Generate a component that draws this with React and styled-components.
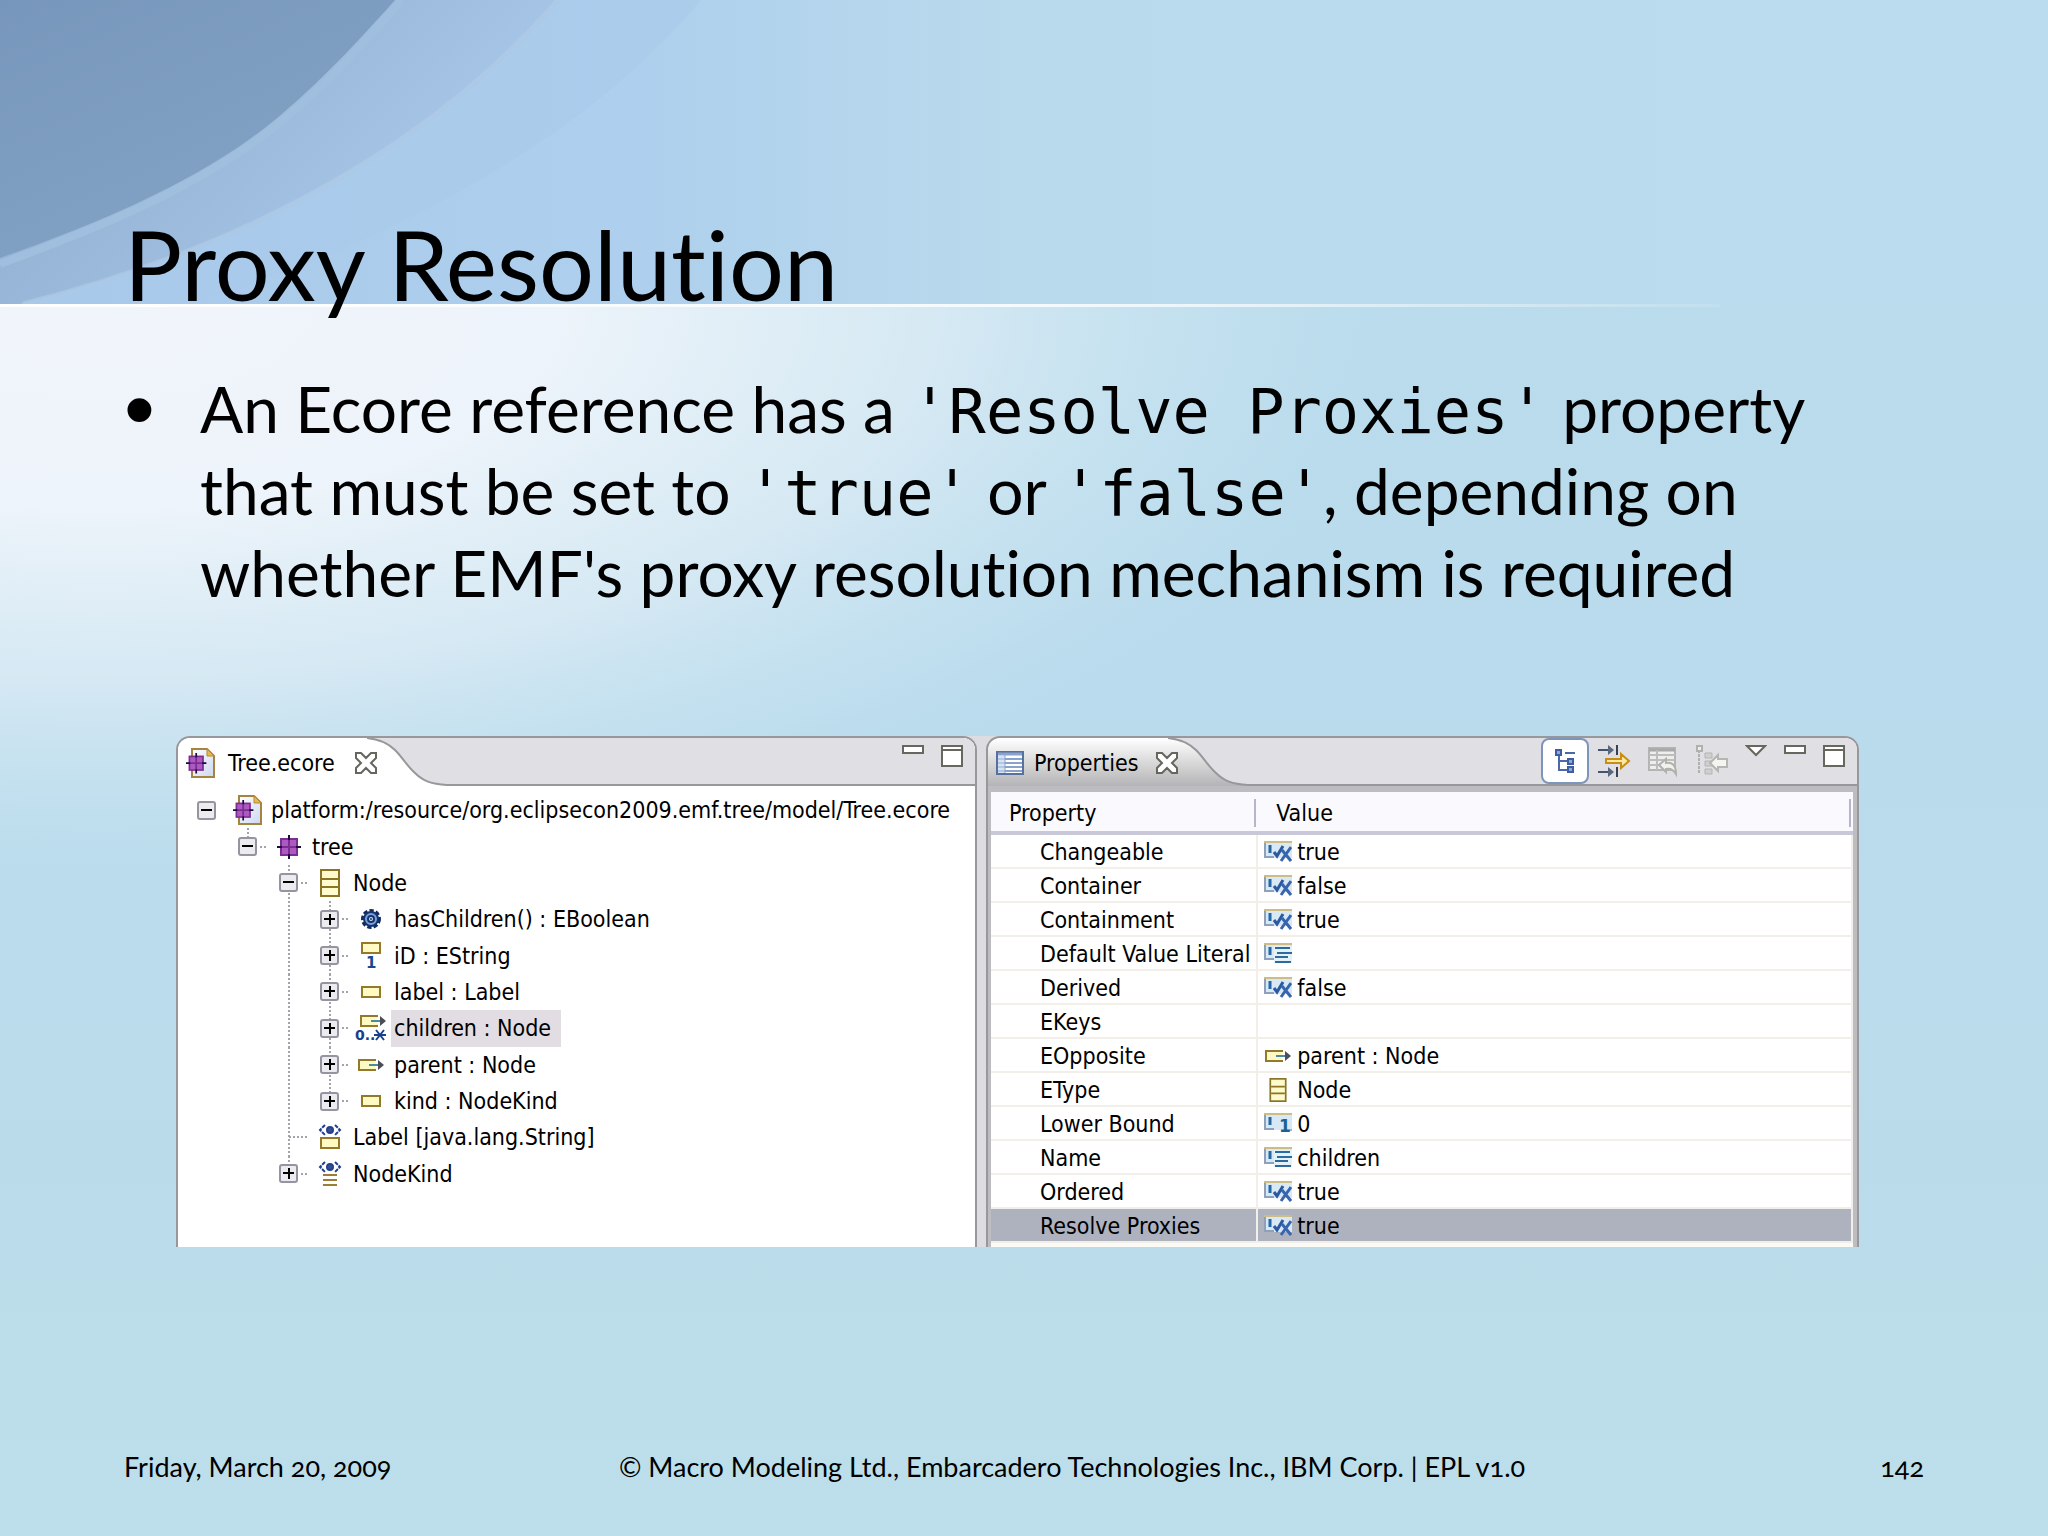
import React, { useState } from 'react';
import styled, { createGlobalStyle, css } from 'styled-components';


const GlobalStyle = createGlobalStyle`
    * {
        box-sizing: border-box;
    }

    body {
        margin: 0;
        background: #bcdeeb;
    }
`;

const Slide = styled.div`
    display: grid;
    min-height: 100vh;
    color: #000;
    font-family: Lato, 'Noto Sans', sans-serif;
    font-variant-ligatures: none;
`;

const Backdrop = styled.svg`
    grid-area: 1 / 1;
    width: 100%;
    height: 100%;
`;

const Content = styled.div`
    grid-area: 1 / 1;
    display: flex;
    flex-direction: column;
    min-width: 0;
    padding: 206px 124px 53px;
`;

const Title = styled.h1`
    margin: 0;
    font-size: 97px;
    font-weight: 400;
    line-height: 116px;
`;

const Bullets = styled.ul`
    margin: 46px 0 0;
    padding: 0;
    list-style: none;
    font-size: 64px;
    line-height: 82px;
`;

const Bullet = styled.li`
    display: flex;
`;

const Dot = styled.span`
    flex: 0 0 76px;
    font-family: 'Liberation Sans', Arial, sans-serif;
    font-size: 88px;
`;

const Code = styled.code`
    font-family: 'DejaVu Sans Mono', monospace;
    font-size: 62px;
    line-height: 1;
`;

const Workbench = styled.div`
    display: grid;
    grid-template-columns: 801fr 873fr;
    gap: 9px;
    margin: 122px 65px 0 52px;
    background: #dddde1;
    border-radius: 14px 14px 0 0;
    font-family: 'DejaVu Sans Condensed', 'DejaVu Sans', Tahoma, sans-serif;
    font-size: 23px;
    line-height: 28px;
`;

const Panel = styled.section`
    display: flex;
    flex-direction: column;
    min-width: 0;
    border: 2px solid #97989b;
    border-bottom: 0;
    border-radius: 14px 14px 0 0;
    background: ${p => p.$framed ? '#bdbdc1' : '#fff'};
`;

const TabBar = styled.div`
    display: flex;
    height: 48px;
    border-radius: 12px 12px 0 0;
    background: ${p => p.$framed ? 'linear-gradient(#fff, #b4b4b6)' : '#fff'};
`;

const Tab = styled.div`
    display: flex;
    align-items: center;
    gap: ${p => p.$wide ? '12px' : '10px'};
    padding: 2px 0 0 8px;
`;

const CurveSvg = styled.svg`
    flex: none;
    margin-left: -10px;
`;

const Toolbar = styled.div`
    display: flex;
    flex: 1;
    align-items: center;
    justify-content: flex-end;
    gap: 17px;
    padding-right: 12px;
    border-bottom: 2px solid #97989b;
    border-top-right-radius: 12px;
    background: #e0dfe4;
`;

const IconButton = styled.button`
    display: flex;
    flex: none;
    padding: 0;
    border: 0;
    background: none;
`;

const CloseButton = styled(IconButton)`
    margin-left: 8px;
`;

const ToggleButton = styled(IconButton)`
    align-items: center;
    justify-content: center;
    width: 48px;
    height: 46px;
    margin-right: -8px;
    border: 2px solid #7c95b8;
    border-radius: 8px;
    background: #fff;
`;

const TreeList = styled.ul`
    display: grid;
    grid-auto-rows: 1fr;
    min-height: 400px;
    margin: 6px 0 54px;
    padding: 0 0 0 8px;
    list-style: none;
`;

const TreeItem = styled.li`
    display: flex;
    align-items: center;
    white-space: nowrap;
`;

const dots = '#a3a3ab 0 2px, transparent 2px 4px';

const guides = {
    none: css`background: none;`,
    top: css`background: repeating-linear-gradient(${dots}) 20px 0 / 2px 50% no-repeat;`,
    full: css`background: repeating-linear-gradient(${dots}) 20px 0 / 2px 100% no-repeat;`,
};

const Guide = styled.span`
    display: flex;
    flex: 0 0 41px;
    align-items: center;
    align-self: stretch;
    ${p => guides[p.$line || 'none']}
`;

const Branch = styled.span`
    flex: 1;
    height: 2px;
    margin-left: ${p => p.$long ? '21px' : '3px'};
    background: repeating-linear-gradient(90deg, ${dots});
`;

const Expander = styled.button`
    display: flex;
    flex: none;
    margin-left: 11px;
    padding: 0;
    border: 0;
    background: none;
`;

const IconCell = styled.span`
    display: flex;
    flex: 0 0 41px;
    align-items: center;
    justify-content: center;
`;

const Label = styled.span`
    display: flex;
    align-items: center;
    align-self: stretch;
    padding: 0 10px 0 3px;
    background: ${p => p.$selected ? '#e1dde3' : 'none'};
`;

const PropertyTable = styled.table`
    width: auto;
    margin: 6px 4px 0 3px;
    border-collapse: separate;
    border-spacing: 0;
    table-layout: fixed;
    background: #fff;
`;

const HeadCell = styled.th`
    height: 43px;
    padding: 2px 0 0 18px;
    border-bottom: 4px solid #c9c8d8;
    background: linear-gradient(#b7b5cc, #b7b5cc) right 2px top 7px / 2px 28px no-repeat, #faf9fe;
    font-weight: 400;
    text-align: left;

    &:first-child {
        width: 31%;
    }
`;

const Cell = styled.td`
    height: 34px;
    padding: 2px 0 0 6px;
    border-right: 2px solid #f2efe8;
    border-bottom: 2px solid #f2efe8;
    background: ${p => p.$selected ? '#aeb1be' : '#fff'};
    white-space: nowrap;
`;

const NameCell = styled(Cell)`
    padding-left: 49px;
`;

const Value = styled.span`
    display: flex;
    align-items: center;
    gap: 5px;
`;

const TableEnd = styled.div`
    height: 4px;
    margin: 0 4px 0 3px;
    background: #fbfaf5;
`;

const Footer = styled.footer`
    display: grid;
    grid-template-columns: 11fr 26fr 3fr;
    margin-top: auto;
    font-size: 27px;
    font-variant-numeric: oldstyle-nums;
    line-height: 32px;
`;

const PageNumber = styled.span`
    text-align: right;
`;


const Waves = () => (
    <Backdrop viewBox="0 0 2048 1536" preserveAspectRatio="none" aria-hidden="true">
        <defs>
            <linearGradient id="base" x1="0" y1="0" x2="0" y2="1">
                <stop offset="0" stopColor="#badcec" />
                <stop offset="0.45" stopColor="#b9dbed" />
                <stop offset="0.75" stopColor="#badcea" />
                <stop offset="1" stopColor="#bddfea" />
            </linearGradient>
            <linearGradient id="sky" x1="0" y1="0" x2="1" y2="0">
                <stop offset="0" stopColor="#a9c8ea" />
                <stop offset="0.3" stopColor="#aecfed" />
                <stop offset="0.5" stopColor="#b9daec" />
                <stop offset="1" stopColor="#bbdcee" />
            </linearGradient>
            <linearGradient id="dark" x1="0" y1="0" x2="0.7" y2="1">
                <stop offset="0" stopColor="#7796bb" />
                <stop offset="1" stopColor="#84a5c6" />
            </linearGradient>
            <linearGradient id="soft" gradientUnits="userSpaceOnUse" x1="180" y1="90" x2="340" y2="240">
                <stop offset="0" stopColor="#97b5d6" />
                <stop offset="1" stopColor="#a5c4e6" />
            </linearGradient>
            <radialGradient id="glow" gradientUnits="userSpaceOnUse" cx="0" cy="0" r="1" gradientTransform="translate(100 305) scale(1300 580)">
                <stop offset="0" stopColor="#f1f4fb" />
                <stop offset="0.35" stopColor="#f0f5fb" stopOpacity="0.95" />
                <stop offset="0.65" stopColor="#e4f0f7" stopOpacity="0.65" />
                <stop offset="0.85" stopColor="#d5e9f3" stopOpacity="0.3" />
                <stop offset="1" stopColor="#cfe5f1" stopOpacity="0" />
            </radialGradient>
            <linearGradient id="horizon" x1="0" y1="0" x2="1" y2="0">
                <stop offset="0" stopColor="#fff" />
                <stop offset="0.6" stopColor="#f4fafd" />
                <stop offset="1" stopColor="#fff" stopOpacity="0.1" />
            </linearGradient>
        </defs>
        <rect width="2048" height="1536" fill="url(#base)" />
        <rect width="2048" height="304" fill="url(#sky)" />
        <path d="M0 0H701C600 120 430 230 190 304H0Z" fill="#a9c9ea" fillOpacity="0.6" />
        <path d="M0 0H555C455 115 290 235 20 304H0Z" fill="url(#soft)" />
        <path d="M558 0C458 115 293 235 23 304" fill="none" stroke="#acc9e6" strokeWidth="5" strokeOpacity="0.7" />
        <path d="M402 0C345 65 295 115 246 148C169 200 84 233 0 264" fill="none" stroke="#a0bedd" strokeWidth="8" />
        <path d="M0 0H395C340 62 290 112 240 146C162 198 78 230 0 258Z" fill="url(#dark)" />
        <rect y="304" width="2048" height="600" fill="url(#glow)" />
        <rect y="304" width="1720" height="3" fill="url(#horizon)" />
    </Backdrop>
);

const Package = ({ x, y }) => (
    <g transform={`translate(${x} ${y})`}>
        <rect x="3" y="3" width="18" height="18" fill="#7d2c94" />
        <path d="M5 5h6v6H5zM13 5h6v6h-6zM5 13h6v6H5zM13 13h6v6h-6z" fill="#ab5bc0" />
        <path d="M12 0v5M12 19v5M0 12h5M19 12h5" stroke="#1e0a3c" strokeWidth="2" />
    </g>
);

const PackageIcon = () => (
    <svg width="24" height="24"><Package x={0} y={0} /></svg>
);

const FileIcon = () => (
    <svg width="30" height="32">
        <defs>
            <linearGradient id="paper" x1="0" y1="0" x2="1" y2="1">
                <stop offset="0" stopColor="#fff" />
                <stop offset="1" stopColor="#ccd8f1" />
            </linearGradient>
        </defs>
        <path d="M6 2H21L28 9V30H6Z" fill="url(#paper)" stroke="#a38441" strokeWidth="2" />
        <path d="M21 2V9H28Z" fill="#e6b753" stroke="#b98a30" strokeWidth="1" />
        <g transform="translate(0 6) scale(0.85)"><Package x={0} y={0} /></g>
    </svg>
);

const ClassIcon = ({ width = 20, height = 28 }) => (
    <svg width={width} height={height} viewBox="0 0 20 28">
        <rect x="1" y="1" width="18" height="26" fill="#fffbcd" stroke="#8c7427" strokeWidth="2" />
        <path d="M2 10H18M2 18H18" stroke="#8c7427" strokeWidth="2" />
    </svg>
);

const OperationIcon = () => (
    <svg width="22" height="22">
        <circle cx="11" cy="11" r="8" fill="none" stroke="#10295e" strokeWidth="4" strokeDasharray="4 2" />
        <circle cx="11" cy="11" r="7" fill="#7ba3d8" stroke="#15336f" strokeWidth="2" />
        <circle cx="11" cy="11" r="3" fill="#d7e6f8" stroke="#15336f" strokeWidth="2" />
        <circle cx="11" cy="11" r="1" fill="#15336f" />
    </svg>
);

const Box = ({ y = 1, width = 18 }) => (
    <rect x="1" y={y} width={width} height="10" fill="#fff9c4" stroke="#94792a" strokeWidth="2" />
);

const AttributeIcon = () => (
    <svg width="20" height="12"><Box /></svg>
);

const IdIcon = () => (
    <svg width="20" height="28">
        <Box />
        <text x="5" y="26" fill="#17498f" fontFamily="DejaVu Sans" fontSize="15" fontWeight="700">1</text>
    </svg>
);

const Arrow = () => (
    <g>
        <path d="M19 0V3M19 9V12" stroke="#fff" strokeWidth="2" />
        <rect x="17" y="3" width="3" height="6" fill="#fff" />
        <path d="M11 6H21" stroke="#4a8aa5" strokeWidth="2" />
        <path d="M20 1L26 6L20 11Z" fill="#4d4d58" />
    </g>
);

const ReferenceIcon = ({ width = 26 }) => (
    <svg width={width} height="12" viewBox="0 0 26 12"><Box /><Arrow /></svg>
);

const ManyIcon = () => (
    <svg width="32" height="26">
        <g transform="translate(5 0)"><Box /><Arrow /></g>
        <text x="0" y="25" fill="#17408c" fontFamily="DejaVu Sans" fontSize="14" fontWeight="700">0..</text>
        <path d="M19 20H31M21 15L29 25M29 15L21 25" stroke="#17408c" strokeWidth="2" />
    </svg>
);

const Eye = () => (
    <g stroke="#23408f" strokeWidth="2" fill="none">
        <path d="M7 1L2 6L7 11M17 1L22 6L17 11" strokeDasharray="4 1" />
        <circle cx="12" cy="6" r="3" fill="#3a4f8f" />
    </g>
);

const DataTypeIcon = () => (
    <svg width="24" height="26">
        <Eye />
        <g transform="translate(2 13)"><Box /></g>
    </svg>
);

const EnumIcon = () => (
    <svg width="24" height="26">
        <Eye />
        <path d="M5 14H19M5 19H19M5 24H19" stroke="#9b7d33" strokeWidth="2" />
    </svg>
);

const ValueBase = () => (
    <g>
        <rect x="0" y="0" width="28" height="17" fill="#d8e9f5" />
        <path d="M0 1H28" stroke="#cbbd85" strokeWidth="2" />
        <path d="M1 2V16H10" fill="none" stroke="#8fa0bb" strokeWidth="2" />
        <path d="M6 4V12" stroke="#2566a5" strokeWidth="3" />
    </g>
);

const BooleanIcon = () => (
    <svg width="28" height="22">
        <ValueBase />
        <path d="M10 11L13 15L19 5" fill="none" stroke="#2c5aa0" strokeWidth="3" />
        <path d="M18 9L27 20M27 6L17 20" fill="none" stroke="#3866ae" strokeWidth="3" />
    </svg>
);

const StringIcon = () => (
    <svg width="28" height="22">
        <ValueBase />
        <rect x="10" y="3" width="18" height="17" fill="#e5f1f8" />
        <path d="M11 5H26M13 10H28M11 14H24M11 19H27" stroke="#2d6a9d" strokeWidth="2" />
    </svg>
);

const NumberIcon = () => (
    <svg width="28" height="22">
        <ValueBase />
        <path d="M17 17H28" stroke="#a9b4c4" strokeWidth="2" />
        <text x="15" y="19" fill="#1d5f94" fontFamily="DejaVu Sans" fontSize="17" fontWeight="700">1</text>
    </svg>
);

const PropertiesIcon = () => (
    <svg width="28" height="24">
        <rect x="1" y="1" width="26" height="22" fill="#fff" stroke="#56719f" strokeWidth="2" />
        <path d="M2 3H26" stroke="#8ba3cb" strokeWidth="3" />
        <path d="M2 8H26M2 12H26M2 16H26M2 20H26" stroke="#8ba3cb" strokeWidth="2" />
        <path d="M2 5H9V22H2Z" fill="#c6d6ef" fillOpacity="0.7" />
        <path d="M9 4V22" stroke="#8ba3cb" strokeWidth="1" />
    </svg>
);

const CloseIcon = () => (
    <svg width="22" height="22">
        <path d="M1 1H6L11 6L16 1H21V6L16 11L21 16V21H16L11 16L6 21H1V16L6 11L1 6Z" fill="#fff" stroke="#66665f" strokeWidth="2" />
    </svg>
);

const MinimizeIcon = () => (
    <svg width="22" height="34">
        <rect x="1" y="2" width="20" height="7" fill="#fff" stroke="#67675f" strokeWidth="2" />
    </svg>
);

const MaximizeIcon = () => (
    <svg width="22" height="34">
        <rect x="1" y="2" width="20" height="20" fill="#fff" stroke="#67675f" strokeWidth="2" />
        <path d="M2 6H20" stroke="#67675f" strokeWidth="2" />
    </svg>
);

const MenuIcon = () => (
    <svg width="22" height="34">
        <path d="M2 2H20L11 11Z" fill="#fff" stroke="#67675f" strokeWidth="2" />
    </svg>
);

const CategoriesIcon = () => (
    <svg width="20" height="24">
        <path d="M4 5V21H14M4 12H14M10 4H20" fill="none" stroke="#4a68aa" strokeWidth="2" />
        <path d="M1 1h5v5H1zM13 10h5v5h-5zM13 18h5v5h-5z" fill="#8ea8d8" stroke="#3f5da2" strokeWidth="2" />
    </svg>
);

const FilterIcon = () => (
    <svg width="33" height="34">
        <path d="M0 6H10M0 28H10" stroke="#44546f" strokeWidth="2" />
        <path d="M10 1L16 6L10 11ZM10 23L16 28L10 33Z" fill="#59687f" />
        <path d="M19 1V11M19 23V33" stroke="#3a4250" strokeWidth="2" />
        <path d="M8 15H23V10L31 17L23 24V19H8Z" fill="#ffe9a0" stroke="#c98d14" strokeWidth="2" />
    </svg>
);

const DefaultsIcon = () => (
    <svg width="30" height="34">
        <rect x="1" y="4" width="26" height="22" fill="#eeeeec" stroke="#b4b4b4" strokeWidth="2" />
        <path d="M1 6H27" stroke="#a9a9a9" strokeWidth="3" />
        <path d="M1 11H27M1 16H27M1 21H27M9 6V26" stroke="#bdbdbd" strokeWidth="2" />
        <path d="M11 21L18 15V19C25 18 28 22 28 30C25 25 22 24 18 25V28Z" fill="#f1f1ee" stroke="#b0b0ac" strokeWidth="2" />
    </svg>
);

const LocateIcon = () => (
    <svg width="33" height="34">
        <path d="M4 6V30" stroke="#b0b0b0" strokeWidth="2" strokeDasharray="3 1" />
        <path d="M2 2h5v5H2z" fill="#eee" stroke="#b0b0b0" strokeWidth="2" />
        <path d="M10 9h7v5h-7zM10 17h7v5h-7zM10 25h7v5h-7z" fill="#cfcfcf" stroke="#b4b4b4" strokeWidth="1" />
        <path d="M15 19L23 11V15H32V23H23V27Z" fill="#f4f4f1" stroke="#b5b5b1" strokeWidth="2" />
    </svg>
);

const ToggleIcon = ({ open }) => (
    <svg width="19" height="19">
        <rect x="1" y="1" width="17" height="17" rx="2" fill="#ececf0" stroke="#9495a0" strokeWidth="2" />
        <path d={open ? 'M4 9H15' : 'M4 9H15M10 4V15'} stroke="#000" strokeWidth="2" />
    </svg>
);

const Curve = () => (
    <CurveSvg width="80" height="48" aria-hidden="true">
        <path d="M0 0C10 1 20 4 28 12C36 20 40 28 48 35C56 43 64 46 80 47V0Z" fill="#e0dfe4" />
        <path d="M0 0C10 1 20 4 28 12C36 20 40 28 48 35C56 43 64 46 80 47" fill="none" stroke="#97989b" strokeWidth="2" />
    </CurveSvg>
);


const nodes = [
    { label: 'platform:/resource/org.eclipsecon2009.emf.tree/model/Tree.ecore', icon: FileIcon, cells: [], line: 'none', open: true, root: true },
    { label: 'tree', icon: PackageIcon, cells: ['none'], line: 'top', open: true },
    { label: 'Node', icon: ClassIcon, cells: ['none', 'none'], line: 'full', open: true },
    { label: 'hasChildren() : EBoolean', icon: OperationIcon, cells: ['none', 'none', 'full'], line: 'full', open: false },
    { label: 'iD : EString', icon: IdIcon, cells: ['none', 'none', 'full'], line: 'full', open: false },
    { label: 'label : Label', icon: AttributeIcon, cells: ['none', 'none', 'full'], line: 'full', open: false },
    { label: 'children : Node', icon: ManyIcon, cells: ['none', 'none', 'full'], line: 'full', open: false },
    { label: 'parent : Node', icon: ReferenceIcon, cells: ['none', 'none', 'full'], line: 'full', open: false },
    { label: 'kind : NodeKind', icon: AttributeIcon, cells: ['none', 'none', 'full'], line: 'top', open: false },
    { label: 'Label [java.lang.String]', icon: DataTypeIcon, cells: ['none', 'none'], line: 'full', leaf: true },
    { label: 'NodeKind', icon: EnumIcon, cells: ['none', 'none'], line: 'top', open: false },
];

const properties = [
    { name: 'Changeable', value: 'true', icon: BooleanIcon },
    { name: 'Container', value: 'false', icon: BooleanIcon },
    { name: 'Containment', value: 'true', icon: BooleanIcon },
    { name: 'Default Value Literal', value: '', icon: StringIcon },
    { name: 'Derived', value: 'false', icon: BooleanIcon },
    { name: 'EKeys', value: '' },
    { name: 'EOpposite', value: 'parent : Node', icon: () => <ReferenceIcon width={28} /> },
    { name: 'EType', value: 'Node', icon: () => <ClassIcon width={28} height={24} /> },
    { name: 'Lower Bound', value: '0', icon: NumberIcon },
    { name: 'Name', value: 'children', icon: StringIcon },
    { name: 'Ordered', value: 'true', icon: BooleanIcon },
    { name: 'Resolve Proxies', value: 'true', icon: BooleanIcon },
];


const EcoreTree = () => {
    const [selected, setSelected] = useState('children : Node');

    return (
        <Panel>
            <TabBar>
                <Tab $wide>
                    <FileIcon />
                    <span>Tree.ecore</span>
                    <CloseButton aria-label="Close Tree.ecore"><CloseIcon /></CloseButton>
                </Tab>
                <Curve />
                <Toolbar>
                    <IconButton aria-label="Minimize"><MinimizeIcon /></IconButton>
                    <IconButton aria-label="Maximize"><MaximizeIcon /></IconButton>
                </Toolbar>
            </TabBar>

            <TreeList>
                { nodes.map(({ label, icon: Icon, cells, line, open, leaf, root }) => (
                    <TreeItem key={label}>
                        { cells.map((cell, i) => <Guide key={i} $line={cell} />) }
                        <Guide $line={line}>
                            { !leaf && <Expander aria-label={`Toggle ${label}`}><ToggleIcon open={open} /></Expander> }
                            { !root && <Branch $long={leaf} /> }
                        </Guide>
                        <IconCell><Icon /></IconCell>
                        <Label $selected={label === selected} onClick={ () => setSelected(label) }>{label}</Label>
                    </TreeItem>
                )) }
            </TreeList>
        </Panel>
    );
}

const Properties = () => {
    const [selected, setSelected] = useState('Resolve Proxies');

    return (
        <Panel $framed>
            <TabBar $framed>
                <Tab>
                    <PropertiesIcon />
                    <span>Properties</span>
                    <CloseButton aria-label="Close Properties"><CloseIcon /></CloseButton>
                </Tab>
                <Curve />
                <Toolbar>
                    <ToggleButton aria-label="Show Categories"><CategoriesIcon /></ToggleButton>
                    <IconButton aria-label="Show Advanced Properties"><FilterIcon /></IconButton>
                    <IconButton aria-label="Restore Default Value" disabled><DefaultsIcon /></IconButton>
                    <IconButton aria-label="Locate Value" disabled><LocateIcon /></IconButton>
                    <IconButton aria-label="View Menu"><MenuIcon /></IconButton>
                    <IconButton aria-label="Minimize"><MinimizeIcon /></IconButton>
                    <IconButton aria-label="Maximize"><MaximizeIcon /></IconButton>
                </Toolbar>
            </TabBar>

            <PropertyTable>
                <thead>
                    <tr>
                        <HeadCell>Property</HeadCell>
                        <HeadCell>Value</HeadCell>
                    </tr>
                </thead>
                <tbody>
                    { properties.map(({ name, value, icon: Icon }) => (
                        <tr key={name} onClick={ () => setSelected(name) }>
                            <NameCell $selected={name === selected}>{name}</NameCell>
                            <Cell $selected={name === selected}>
                                <Value>{ Icon && <Icon /> }{value}</Value>
                            </Cell>
                        </tr>
                    )) }
                </tbody>
            </PropertyTable>
            <TableEnd />
        </Panel>
    );
}

export default () => {
    return (
        <Slide>
            <GlobalStyle />
            <Waves />

            <Content>
                <Title>Proxy Resolution</Title>

                <Bullets>
                    <Bullet>
                        <Dot>•</Dot>
                        <span>
                            An Ecore reference has a <Code>'Resolve Proxies'</Code> property
                            that must be set to <Code>'true'</Code> or <Code>'false'</Code>, depending on
                            whether EMF's proxy resolution mechanism is required
                        </span>
                    </Bullet>
                </Bullets>

                <Workbench>
                    <EcoreTree />
                    <Properties />
                </Workbench>

                <Footer>
                    <span>Friday, March 20, 2009</span>
                    <span>© Macro Modeling Ltd., Embarcadero Technologies Inc., IBM Corp. | EPL v1.0</span>
                    <PageNumber>142</PageNumber>
                </Footer>
            </Content>
        </Slide>
    );
}
